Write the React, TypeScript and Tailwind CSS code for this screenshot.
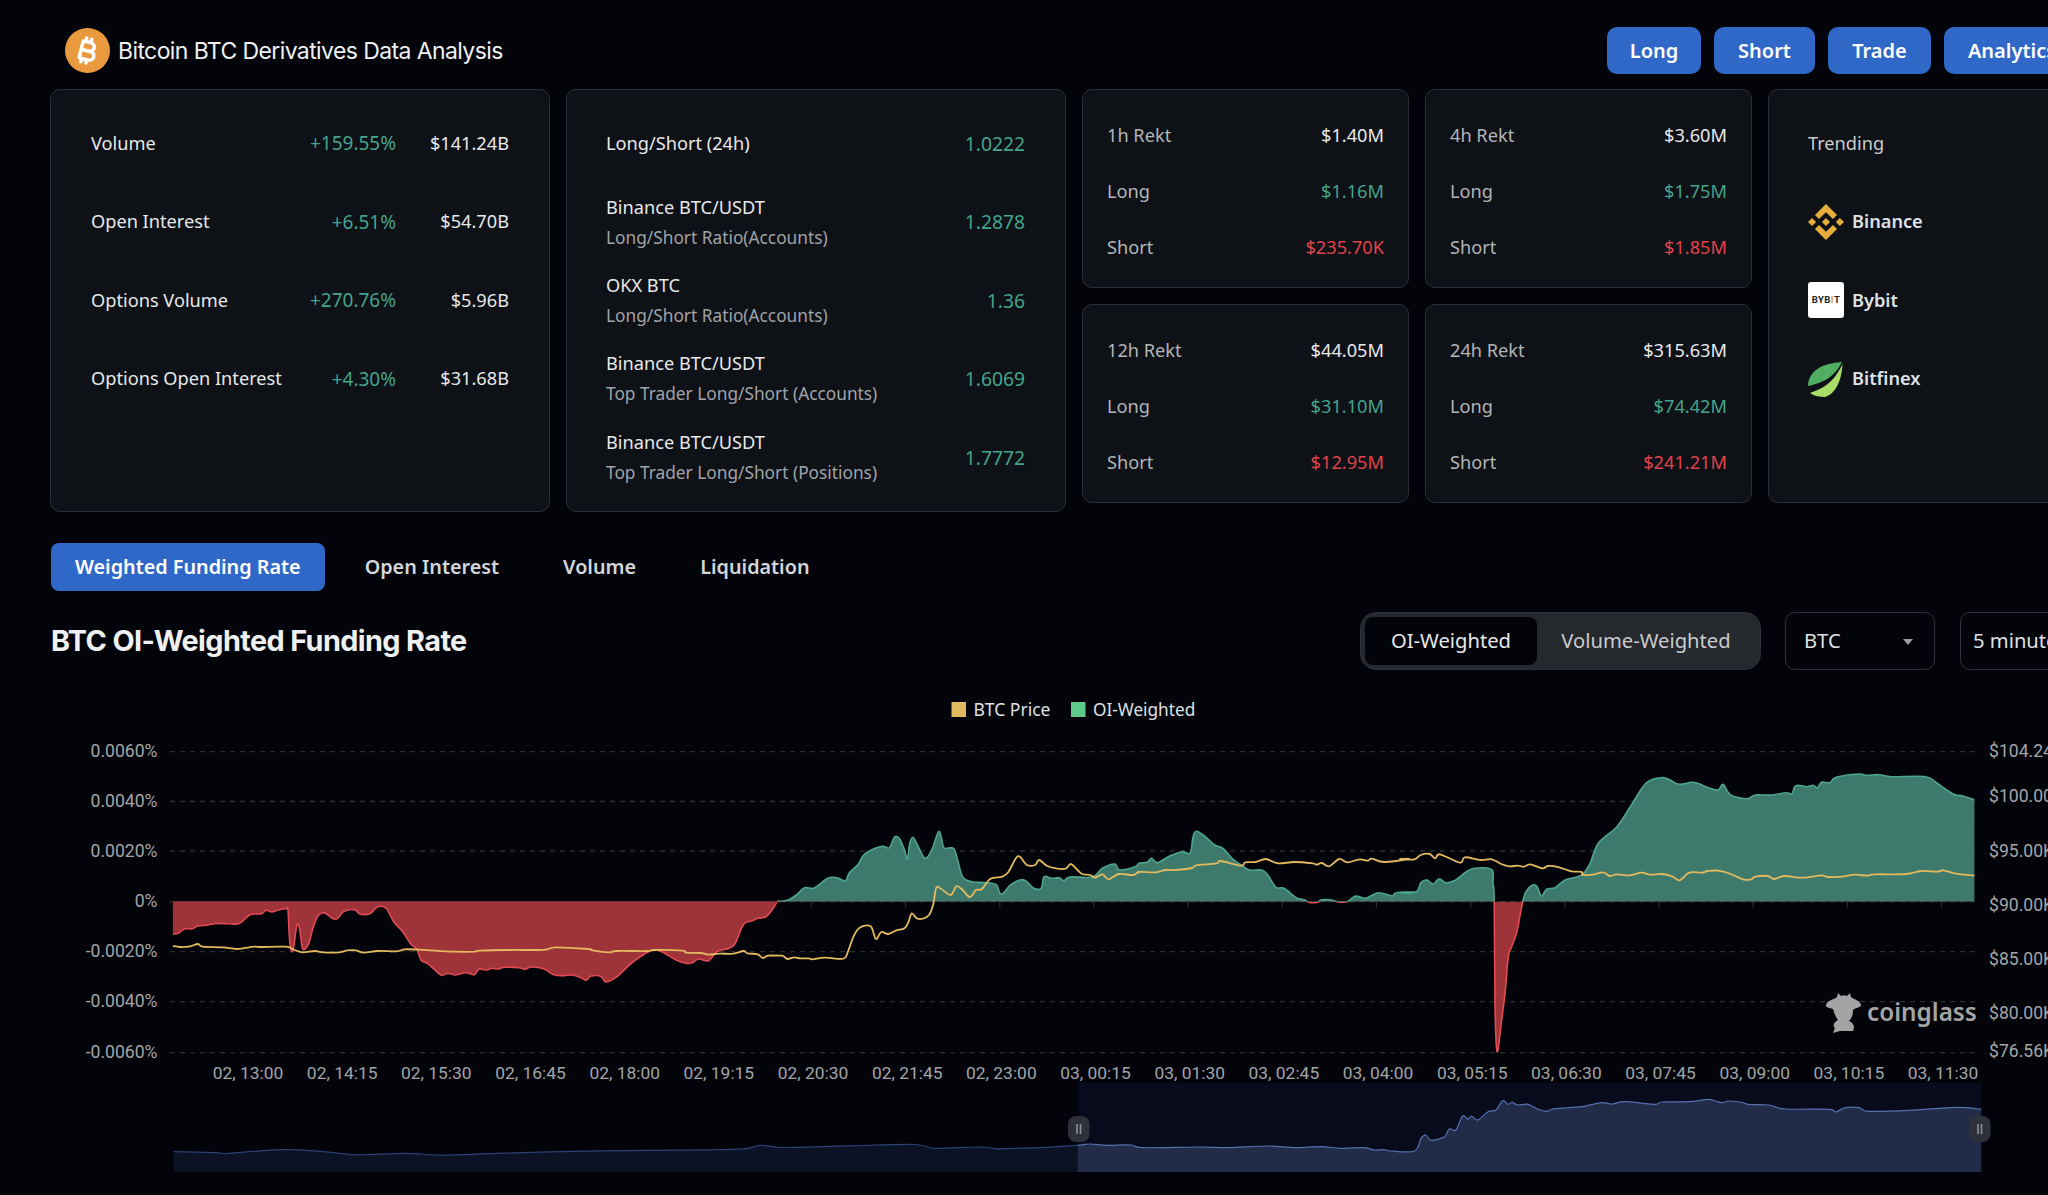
import React from "react";
import { FaBitcoinSign } from "react-icons/fa6";
import { SiBinance } from "react-icons/si";

type P = [number, number];
const map = (a: number[], x0: number, sx: number, y0: number, sy: number): P[] => {
  const o: P[] = [];
  for (let i = 0; i < a.length; i += 2) o.push([x0 + a[i] / sx, y0 + a[i + 1] / sy]);
  return o;
};
const smooth = (p: P[]) => {
  let d = `M${p[0][0].toFixed(1)} ${p[0][1].toFixed(1)}`;
  for (let i = 0; i < p.length - 1; i++) {
    const a = p[Math.max(i - 1, 0)], b = p[i], c = p[i + 1], e = p[Math.min(i + 2, p.length - 1)];
    const c1x = b[0] + (c[0] - a[0]) / 6, c1y = b[1] + (c[1] - a[1]) / 6;
    const c2x = c[0] - (e[0] - b[0]) / 6, c2y = c[1] - (e[1] - b[1]) / 6;
    d += `C${c1x.toFixed(1)} ${c1y.toFixed(1)} ${c2x.toFixed(1)} ${c2y.toFixed(1)} ${c[0].toFixed(1)} ${c[1].toFixed(1)}`;
  }
  return d;
};

const ZERO = 901.7;
const funding: P[] = [
  ...map([7,582,20,580,35,567,55,566,68,558,90,556,110,551,140,551,165,552,178,543,195,525,210,522,225,521,235,511,250,516,265,510,285,506,289,510,293,600,298,634,303,620,310,560,314,553,318,570,324,622,331,627,340,610,350,565,362,528,375,518,385,523,400,536,410,536,425,515,440,509,455,511,465,522,490,521,505,503,520,499,532,508,548,545,570,575,590,612,605,628,615,660,630,670,645,685,665,706,680,700,700,705,725,698,745,704,757,687,775,690,790,685,805,687,820,682,855,683,870,688,885,681,915,686,940,704,965,707,985,705,1005,712,1020,721,1030,709,1055,709,1065,724,1075,724,1095,710,1130,670,1165,640,1185,630,1205,635,1240,660,1265,670,1280,668,1295,657,1320,662,1340,635,1370,625,1385,610,1400,565,1410,548,1425,543,1440,535,1460,530,1475,510,1488,485], 170, 2.45, 740, 3),
  ...map([0,484,20,480,40,465,60,443,82,445,100,430,118,414,140,413,160,423,170,398,190,375,205,345,225,329,250,319,268,323,280,292,292,295,305,330,312,358,318,310,325,292,335,310,352,352,362,350,375,320,388,275,395,290,402,324,425,325,435,360,448,412,470,425,505,428,530,434,542,463,565,435,590,419,605,425,622,445,640,445,647,410,665,415,685,413,695,423,710,411,765,411,790,385,820,372,832,390,870,380,880,370,900,367,910,355,925,368,955,348,985,335,1005,340,1012,290,1020,274,1040,288,1065,315,1085,325,1110,358,1130,375,1150,390,1180,390,1195,405,1215,442,1235,445,1265,473,1285,479,1295,487,1318,487,1325,480,1350,480,1365,485,1390,485,1410,468,1435,475,1465,458,1500,468,1510,458,1560,455], 780, 2.45, 740, 3),
  ...map([0,458,40,455,50,428,65,420,80,432,95,416,110,428,135,420,155,400,180,385,222,389,225,430,228,485,230,800,235,935,245,850,255,750,262,650,270,620,282,580,290,530,297,485,305,455,320,436,332,440,342,468,355,448,375,443,400,420,440,405,460,370,480,310,525,260,555,205,595,130,630,113,650,118,675,133,705,127,720,130,750,145,770,150,782,133,800,165,840,176,860,165,900,165,935,158,948,162,958,137,985,140,1000,136,1010,143,1020,127,1040,128,1055,112,1110,102,1130,106,1160,104,1190,110,1272,110,1300,130,1340,163,1360,167,1390,179], 1400, 2.42, 740, 3),
];
const price: P[] = [
  ...map([7,618,25,621,50,619,68,612,80,620,130,622,165,627,205,620,220,621,285,620,305,630,325,637,355,633,375,637,415,637,435,631,455,631,475,638,510,633,555,634,575,628,610,629,650,632,700,635,745,635,760,632,830,630,900,630,925,628,945,622,1025,627,1035,631,1075,637,1095,633,1170,633,1185,630,1255,632,1265,638,1300,639,1320,644,1345,641,1380,641,1405,633,1415,640,1440,643,1452,654,1465,647,1495,647], 170, 2.45, 740, 3),
  ...map([8,648,18,657,35,652,50,655,70,655,80,658,110,653,155,656,165,640,180,590,195,563,222,559,235,597,248,576,265,582,285,571,305,565,315,545,323,520,335,535,350,536,365,525,375,495,383,443,395,447,418,465,432,439,445,447,465,471,480,450,495,447,515,417,545,410,560,395,578,355,588,350,605,375,625,375,635,360,655,378,680,386,700,386,712,372,725,385,740,402,760,405,772,413,790,403,805,418,830,402,865,405,880,396,920,397,945,390,970,390,1010,384,1020,376,1070,370,1080,363,1130,377,1140,367,1165,366,1190,357,1220,370,1260,366,1305,370,1315,374,1328,369,1345,379,1370,357,1390,367,1420,358,1440,362,1450,356,1480,366,1540,357], 780, 2.45, 740, 3),
  ...map([0,357,35,358,50,345,72,342,85,355,97,343,145,368,157,352,195,360,222,358,245,372,265,379,285,377,300,380,315,373,345,385,358,378,385,382,415,394,440,396,442,405,470,403,492,397,508,408,525,403,555,406,585,398,605,404,635,402,660,410,677,421,700,398,730,398,745,393,770,392,800,402,830,418,850,418,860,410,890,408,905,417,930,408,975,413,1020,406,1035,411,1070,410,1100,404,1130,407,1150,403,1225,402,1260,393,1300,395,1315,391,1345,401,1390,407], 1400, 2.42, 740, 3),
];
const mini: P[] = [
  ...map([266,1466,330,1468,350,1470,430,1461,490,1465,545,1473,620,1470,680,1474,760,1470,880,1465,1000,1463,1130,1460,1165,1451,1200,1456,1300,1452,1400,1449,1430,1458,1500,1455,1530,1460], 0, 1.531, 530, 2.358),
  ...map([0,266,60,263,116,256,135,252,160,256,195,255,215,263,300,261,340,263,400,258,440,263,480,260,510,265,545,263,560,270,575,269,585,273,620,273,630,235,637,225,645,241,665,230,672,207,682,210,692,168,700,178,705,168,715,180,730,155,742,150,752,122,760,133,766,127,775,135,790,133,805,148,818,154,830,146,870,140,900,128,915,132,935,125,980,133,990,126,1030,125,1060,118,1070,123,1080,128,1090,123,1110,127,1120,133,1150,135,1175,147,1240,148,1250,156,1265,143,1285,143,1300,154,1360,151,1430,142,1468,148], 1000, 1.496, 1060, 3),
];

const fundingD = smooth(funding);
const fundingArea = `${fundingD}L${funding[funding.length - 1][0]} ${ZERO}L${funding[0][0]} ${ZERO}Z`;
const MB = 1172;
const miniD = smooth(mini);
const miniArea = `${miniD}L${mini[mini.length - 1][0]} ${MB}L${mini[0][0]} ${MB}Z`;

const gridYs = [751.7, 801.5, 851, 901.7, 951.7, 1001.7, 1052.7];
const leftLabels = ["0.0060%", "0.0040%", "0.0020%", "0%", "-0.0020%", "-0.0040%", "-0.0060%"];
const rightLabels: [string, number][] = [["$104.24K", 751], ["$100.00K", 796], ["$95.00K", 851], ["$90.00K", 905], ["$85.00K", 959], ["$80.00K", 1013], ["$76.56K", 1051]];
const xLabels = ["02, 13:00","02, 14:15","02, 15:30","02, 16:45","02, 18:00","02, 19:15","02, 20:30","02, 21:45","02, 23:00","03, 00:15","03, 01:30","03, 02:45","03, 04:00","03, 05:15","03, 06:30","03, 07:45","03, 09:00","03, 10:15","03, 11:30"];

function Chart() {
  return (
    <svg viewBox="0 670 2048 525" className="block w-[2048px] h-[525px]">
      <defs>
        <clipPath id="up"><rect x="0" y="670" width="2048" height={ZERO - 670} /></clipPath>
        <clipPath id="down"><rect x="0" y={ZERO} width="2048" height="300" /></clipPath>
        <clipPath id="mL"><rect x="0" y="1060" width="1077.6" height="135" /></clipPath>
        <clipPath id="mR"><rect x="1077.6" y="1060" width="1000" height="135" /></clipPath>
      </defs>

      <rect x="951.5" y="702" width="14.5" height="15" fill="#e3b95f" />
      <text x="973.5" y="715.500" className="font-['Noto_Sans',sans-serif] text-[17.5px] fill-[#dfe1e4]">BTC Price</text>
      <rect x="1071" y="702" width="14.5" height="15" fill="#5ec98b" />
      <text x="1093" y="715.500" className="font-['Noto_Sans',sans-serif] text-[17.2px] fill-[#dfe1e4]">OI-Weighted</text>

      {gridYs.map((y) => (
        <line key={y} x1="170" x2="1977" y1={y} y2={y} stroke="#2a2c31" strokeWidth="1.3" strokeDasharray="5 5" />
      ))}
      {xLabels.map((_, i) => (
        <line key={i} x1={246.4 + i * 94.17} x2={246.4 + i * 94.17} y1={ZERO} y2={ZERO + 6} stroke="#2a2c31" strokeWidth="1.2" />
      ))}

      <g clipPath="url(#up)">
        <path d={fundingArea} fill="#3e7a6c" />
        <path d={fundingD} fill="none" stroke="#4da592" strokeWidth="1.6" />
      </g>
      <g clipPath="url(#down)">
        <path d={fundingArea} fill="#9e3339" />
        <path d={fundingD} fill="none" stroke="#e24b53" strokeWidth="1.6" />
      </g>
      <line x1="173" x2="778" y1={ZERO} y2={ZERO} stroke="#7d2c33" strokeWidth="1.2" />
      <path d={smooth(price)} fill="none" stroke="#e3b95f" strokeWidth="1.8" />

      {leftLabels.map((t, i) => (
        <text key={t} x="157.5" y={gridYs[i] + 5.5} textAnchor="end" className="font-['Roboto',sans-serif] text-[17.6px] fill-[#a2a4a8]">{t}</text>
      ))}
      {rightLabels.map(([t, y]) => (
        <text key={t} x="1989" y={y + 6} className="font-['Roboto',sans-serif] text-[17.6px] fill-[#a2a4a8]">{t}</text>
      ))}
      {xLabels.map((t, i) => (
        <text key={t} x={248 + i * 94.17} y="1079" textAnchor="middle" className="font-['Roboto',sans-serif] text-[17.4px] fill-[#a2a4a8]">{t}</text>
      ))}

      <path d="M1826 1006C1826 1000 1834 1000 1837 997L1838 993L1841 996C1843 995 1845 995 1847 996L1850 993L1851 997C1854 1000 1861 1000 1861 1006C1858 1008 1855 1008 1853 1010C1853 1016 1851 1019 1849 1021C1854 1023 1855 1027 1853 1031L1840 1031L1833 1033L1835 1028C1832 1026 1834 1022 1838 1020C1835 1016 1834 1012 1833 1009C1831 1008 1827 1008 1826 1006Z" fill="#a4a4a4" />
      <text x="1867" y="1021" className="font-['Noto_Sans',sans-serif] text-[24.3px] font-semibold fill-[#a4a4a4]">coinglass</text>

      <rect x="1077.6" y="1082.6" width="903.4" height="89.4" fill="#070b1c" />
      <g clipPath="url(#mL)">
        <path d={miniArea} fill="#0b1224" />
        <path d={miniD} fill="none" stroke="#2b4177" strokeWidth="1.2" />
      </g>
      <g clipPath="url(#mR)">
        <path d={miniArea} fill="#222b47" />
        <path d={miniD} fill="none" stroke="#5670b0" strokeWidth="1.2" />
      </g>
      {[1068, 1969].map((x) => (
        <g key={x}>
          <rect x={x} y="1116" width="21.5" height="26" rx="8" fill="#2e3139" />
          <rect x={x + 8.2} y="1124" width="1.6" height="10" fill="#8d9096" />
          <rect x={x + 11.7} y="1124" width="1.6" height="10" fill="#8d9096" />
        </g>
      ))}
    </svg>
  );
}

const cardCls = "rounded-[10px] border-[1.5px] border-[#2c2f35] bg-[#0e1116] shrink-0";
const green = "text-[#45a38b]";
const red = "text-[#e0434b]";

function Row1({ label, pct, val }: { label: string; pct: string; val: string }) {
  return (
    <div className="flex h-[78.4px] items-center">
      <span className="flex-1 text-[#e6e8ea]">{label}</span>
      <span className={`${green} text-[19px]`}>{pct}</span>
      <span className="w-[113px] text-right text-[#e6e8ea]">{val}</span>
    </div>
  );
}
function Row2({ a, b, val }: { a: string; b?: string; val: string }) {
  return (
    <div className="flex h-[78.4px] items-center">
      <div className="flex flex-1 flex-col gap-[7px]">
        <span className="leading-[23px] text-[#e6e8ea]">{a}</span>
        {b && <span className="text-[17.3px] leading-[23px] text-[#a0a3a8]">{b}</span>}
      </div>
      <span className={`${green} pt-[1.5px] text-[19.3px]`}>{val}</span>
    </div>
  );
}
function Rekt({ title, total, long, short }: { title: string; total: string; long: string; short: string }) {
  const rows: [string, string, string, string][] = [
    [title, total, "text-[#b3b5b8]", "text-[#e8e9eb]"],
    ["Long", long, "text-[#b3b5b8]", green],
    ["Short", short, "text-[#b3b5b8]", red],
  ];
  return (
    <div className={`${cardCls} h-[199px] w-[327px] px-[24px] pt-[18px]`}>
      {rows.map(([l, v, c1, c2]) => (
        <div key={l} className="flex h-[55.8px] items-center justify-between">
          <span className={c1}>{l}</span>
          <span className={c2}>{v}</span>
        </div>
      ))}
    </div>
  );
}
function Ex({ icon, name }: { icon: React.ReactNode; name: string }) {
  return (
    <div className="flex h-[78.4px] items-center gap-[8px]">
      <div className="h-[36px] w-[36px]">{icon}</div>
      <span className="font-semibold text-[#dfe2e6]">{name}</span>
    </div>
  );
}

export default function App() {
  return (
    <div className="h-[1195px] w-[2048px] overflow-hidden bg-[#030409] font-['Noto_Sans',sans-serif] text-[18.2px] text-[#e6e8ea]">
      <header className="flex h-[89px] pl-[65px] pt-[27px]">
        <div className="flex h-[47px] w-[1542px] shrink-0 items-center gap-[8px]">
          <div className="flex h-[45px] w-[45px] items-center justify-center rounded-full bg-[#e9993e]">
            <FaBitcoinSign className="h-[28px] w-[28px] rotate-[14deg] text-white" />
          </div>
          <h1 className="pt-[1px] font-['Inter',sans-serif] text-[23px] font-normal tracking-[-0.6px] text-[#eef0f2]">Bitcoin BTC Derivatives Data Analysis</h1>
        </div>
        <nav className="flex shrink-0 gap-[13px]">
          {["Long", "Short", "Trade", "Analytics"].map((t, i) => (
            <button key={t} className={`h-[47px] shrink-0 rounded-[10px] bg-[#3068c8] text-[20px] font-semibold text-white ${["w-[94px]", "w-[101px]", "w-[103px]", "w-[136px]"][i]}`}>{t}</button>
          ))}
        </nav>
      </header>

      <section className="flex items-start gap-4 pl-[50px]">
        <div className={`${cardCls} h-[423px] w-[500px] px-[40px] pt-[14.5px]`}>
          <Row1 label="Volume" pct="+159.55%" val="$141.24B" />
          <Row1 label="Open Interest" pct="+6.51%" val="$54.70B" />
          <Row1 label="Options Volume" pct="+270.76%" val="$5.96B" />
          <Row1 label="Options Open Interest" pct="+4.30%" val="$31.68B" />
        </div>
        <div className={`${cardCls} h-[423px] w-[500px] pl-[39px] pr-[40px] pt-[14.5px]`}>
          <Row2 a="Long/Short (24h)" val="1.0222" />
          <Row2 a="Binance BTC/USDT" b="Long/Short Ratio(Accounts)" val="1.2878" />
          <Row2 a="OKX BTC" b="Long/Short Ratio(Accounts)" val="1.36" />
          <Row2 a="Binance BTC/USDT" b="Top Trader Long/Short (Accounts)" val="1.6069" />
          <Row2 a="Binance BTC/USDT" b="Top Trader Long/Short (Positions)" val="1.7772" />
        </div>
        <div className="flex shrink-0 flex-col gap-4">
          <Rekt title="1h Rekt" total="$1.40M" long="$1.16M" short="$235.70K" />
          <Rekt title="12h Rekt" total="$44.05M" long="$31.10M" short="$12.95M" />
        </div>
        <div className="flex shrink-0 flex-col gap-4">
          <Rekt title="4h Rekt" total="$3.60M" long="$1.75M" short="$1.85M" />
          <Rekt title="24h Rekt" total="$315.63M" long="$74.42M" short="$241.21M" />
        </div>
        <div className={`${cardCls} h-[414px] w-[500px] px-[39px] pt-[14.5px]`}>
          <div className="flex h-[78.4px] items-center text-[#c9cbce]">Trending</div>
          <Ex name="Binance" icon={<SiBinance className="h-[36px] w-[36px] text-[#e5ae3c]" />} />
          <Ex
            name="Bybit"
            icon={
              <div className="flex h-[36px] w-[36px] items-center justify-center rounded-[3px] bg-white font-['Roboto',sans-serif] text-[9.5px] font-bold tracking-[0.4px] text-[#222]">
                BYB<span className="text-[#e8a33d]">I</span>T
              </div>
            }
          />
          <Ex
            name="Bitfinex"
            icon={
              <svg viewBox="0 0 36 36" className="h-[36px] w-[36px]">
                <path d="M34 1C20 2 10 5 4 13C1 17 0 21 0 25C14 22 26 17 34 1Z" fill="#4fae62" />
                <path d="M34.500 3C28 17 20 26 2 32C6 35 12 36 17 36C28 33 34 18 34.500 3Z" fill="#a9dd68" />
              </svg>
            }
          />
        </div>
      </section>

      <div className="mt-[31px] flex gap-4 pl-[51px]">
        {["Weighted Funding Rate", "Open Interest", "Volume", "Liquidation"].map((t, i) => (
          <button key={t} className={`h-[48px] rounded-[8px] px-[24px] text-[19.8px] font-semibold ${i === 0 ? "bg-[#3068c8] text-white" : "text-[#d3d6da]"}`}>{t}</button>
        ))}
      </div>

      <div className="mt-[21px] flex h-[58px] items-center pl-[51px]">
        <h2 className="w-[1309px] shrink-0 font-['Inter',sans-serif] text-[28.8px] font-bold tracking-[-0.6px] text-[#eef0f2]">BTC OI-Weighted Funding Rate</h2>
        <div className="flex h-[58px] w-[401px] shrink-0 items-center rounded-[16px] border-[1.5px] border-[#2e3238] bg-[#25282d] pb-[1px] pl-[4px] text-[20.2px]">
          <div className="flex h-[48px] w-[172px] items-center justify-center rounded-[8px] bg-[#030409] pb-[1px] text-[#e6e8ea]">OI-Weighted</div>
          <div className="flex-1 pr-[5px] text-center text-[#c9cbce]">Volume-Weighted</div>
        </div>
        <div className="relative ml-[24px] flex h-[58px] w-[150px] shrink-0 items-center rounded-[10px] border-[1.5px] border-[#2e3238] pb-[1px] pl-[18px] text-[20.2px] text-[#dfe1e4]">
          BTC
          <span className="absolute right-[21px] top-[26px] h-0 w-0 border-x-[5.5px] border-t-[6px] border-x-transparent border-t-[#9a9da2]" />
        </div>
        <div className="ml-[25px] flex h-[58px] w-[200px] shrink-0 items-center rounded-[10px] border-[1.5px] border-[#2e3238] pb-[1px] pl-[12px] text-[20.2px] text-[#dfe1e4]">5 minutes</div>
      </div>

      <Chart />
    </div>
  );
}
